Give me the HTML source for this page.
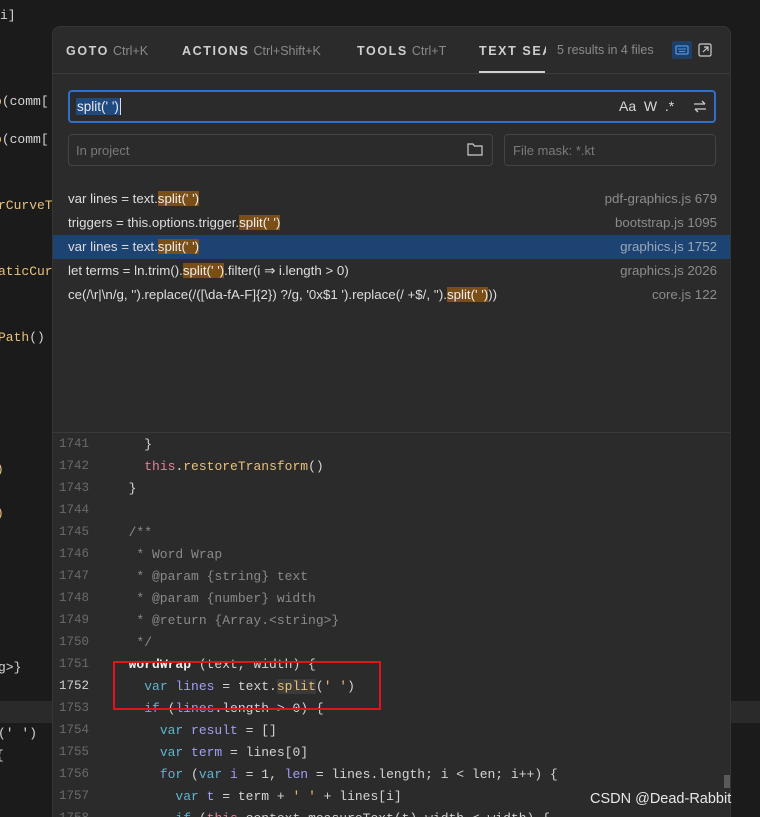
<!DOCTYPE html>
<html><head><meta charset="utf-8"><style>
*{margin:0;padding:0;box-sizing:border-box}
html,body{width:760px;height:817px;overflow:hidden}
body{background:#1b1b1b;position:relative;font-family:"Liberation Sans",sans-serif}
.bgc{position:absolute;font-family:"Liberation Mono",monospace;font-size:13px;color:#d4d4d4;white-space:pre}
.pop{position:absolute;left:52px;top:26px;width:679px;height:791px;background:#2b2b2b;border-radius:8px 8px 0 0;border:1px solid #353535;border-bottom:none;overflow:hidden}
.tab{position:absolute;top:17px;font-size:12.5px;font-weight:bold;letter-spacing:1.6px;color:#cfcfcf;white-space:nowrap}
.tab span{font-weight:normal;letter-spacing:0;color:#8a8a8a;margin-left:4px}
.sep{position:absolute;left:0;right:0;top:46px;height:1px;background:#3c3c3c}
.row{position:absolute;left:0;width:679px;height:24px;font-size:13.3px;color:#dedede;line-height:24px;white-space:nowrap}
.row .t{position:absolute;left:15px}
.row .f{position:absolute;right:15px;color:#8c8c8c}
.h{background:#7a4e17;color:#eee}
.code{position:absolute;left:0;top:405px;width:679px;height:400px;border-top:1px solid #3a3a3a;background:#2b2b2b}
.ln{position:absolute;left:-4px;width:40px;text-align:right;font-family:"Liberation Mono",monospace;font-size:12.5px;color:#6a6a6a}
.cl{position:absolute;left:60px;font-family:"Liberation Mono",monospace;font-size:13px;color:#d4d4d4;white-space:pre}
.k{color:#5fb4d0}.v{color:#9f9ff2}.fn{color:#e8c17a}.c{color:#8a8a8a}.th{color:#e0849a}
</style></head><body>
<div class="bgc" style="left:0;top:8px">i]</div>
<div class="bgc" style="left:-6px;top:94px"><span style="color:#e8c17a">o</span>(comm[</div>
<div class="bgc" style="left:-6px;top:132px"><span style="color:#e8c17a">o</span>(comm[</div>
<div class="bgc" style="left:-2px;top:198px;color:#e8c17a">rCurveT</div>
<div class="bgc" style="left:-2px;top:264px;color:#e8c17a">aticCur</div>
<div class="bgc" style="left:-2px;top:330px"><span style="color:#e8c17a">Path</span>()</div>
<div class="bgc" style="left:-4px;top:462px;color:#e8c17a">)</div>
<div class="bgc" style="left:-4px;top:506px;color:#e8c17a">)</div>
<div class="bgc" style="left:-2px;top:660px">g&gt;}</div>
<div style="position:absolute;left:0;top:701px;width:52px;height:22px;background:#2a2a2a"></div>
<div style="position:absolute;left:731px;top:701px;width:29px;height:22px;background:#2a2a2a"></div>
<div class="bgc" style="left:-2px;top:726px">(' ')</div>
<div class="bgc" style="left:-4px;top:748px">{</div>

<div class="pop">
<div class="tab" style="left:13px">GOTO<span>Ctrl+K</span></div>
<div class="tab" style="left:129px">ACTIONS<span>Ctrl+Shift+K</span></div>
<div class="tab" style="left:304px">TOOLS<span>Ctrl+T</span></div>
<div class="tab" style="left:426px;width:67px;overflow:hidden">TEXT SEARCH</div>
<div style="position:absolute;left:426px;top:44px;width:66px;height:2px;background:#d0d0d0"></div>
<div style="position:absolute;left:504px;top:16px;font-size:12.5px;color:#8a8a8a">5 results in 4 files</div>
<div style="position:absolute;left:619px;top:14px;width:20px;height:18px;background:#1f3f66;border-radius:2px"><svg width="20" height="18"><rect x="4" y="5" width="12" height="8" rx="1" fill="none" stroke="#4d94e6" stroke-width="1.3"/><path d="M6 8h8M7 10.5h6" stroke="#4d94e6"/></svg></div>
<svg style="position:absolute;left:645px;top:16px" width="14" height="14"><rect x="1" y="1" width="12" height="12" rx="1.5" fill="none" stroke="#ccc" stroke-width="1.2"/><path d="M5 9L10 4M6 4h4v4" fill="none" stroke="#ccc" stroke-width="1.2"/></svg>
<div class="sep"></div>

<div style="position:absolute;left:15px;top:63px;width:648px;height:33px;border:2px solid #2f6fcf;border-radius:4px;background:#2b2b2b"></div>
<div style="position:absolute;left:23px;top:71px;height:17px;font-size:13.5px;line-height:17px;color:#eaeaea;background:#1f4a80;padding:0 1px;border-right:1px solid #ddd">split(' ')</div>
<div style="position:absolute;left:566px;top:71px;font-size:14px;color:#d8d8d8;white-space:pre">Aa  W  .*  </div>
<svg style="position:absolute;left:640px;top:71px" width="14" height="16"><path d="M1 6h11M9 3l3 3M13 11H2M5 14l-3-3" fill="none" stroke="#ccc" stroke-width="1.3"/></svg>

<div style="position:absolute;left:15px;top:107px;width:425px;height:32px;border:1px solid #444;border-radius:4px"></div>
<div style="position:absolute;left:23px;top:116px;font-size:13px;color:#7a7a7a">In project</div>
<svg style="position:absolute;left:414px;top:115px" width="16" height="14"><path d="M1 2h5l1.5 2H15v9H1z" fill="none" stroke="#ccc" stroke-width="1.2"/></svg>
<div style="position:absolute;left:451px;top:107px;width:212px;height:32px;border:1px solid #444;border-radius:4px"></div>
<div style="position:absolute;left:460px;top:116px;font-size:13px;color:#7a7a7a">File mask: *.kt</div>

<div class="row" style="top:160px"><span class="t">var lines = text.<span class="h">split(' ')</span></span><span class="f">pdf-graphics.js 679</span></div>
<div class="row" style="top:184px"><span class="t">triggers = this.options.trigger.<span class="h">split(' ')</span></span><span class="f">bootstrap.js 1095</span></div>
<div class="row" style="top:208px;background:#1d4373"><span class="t">var lines = text.<span class="h">split(' ')</span></span><span class="f" style="color:#9aa8b8">graphics.js 1752</span></div>
<div class="row" style="top:232px"><span class="t">let terms = ln.trim().<span class="h">split(' ')</span>.filter(i ⇒ i.length &gt; 0)</span><span class="f">graphics.js 2026</span></div>
<div class="row" style="top:256px"><span class="t">ce(/\r|\n/g, '').replace(/([\da-fA-F]{2}) ?/g, '0x$1 ').replace(/ +$/, '').<span class="h">split(' ')</span>))</span><span class="f">core.js 122</span></div>

<div class="code">
<div class="ln" style="top:4px">1741</div><div class="cl" style="top:4px">    }</div>
<div class="ln" style="top:26px">1742</div><div class="cl" style="top:26px">    <span class="th">this</span>.<span class="fn">restoreTransform</span>()</div>
<div class="ln" style="top:48px">1743</div><div class="cl" style="top:48px">  }</div>
<div class="ln" style="top:70px">1744</div>
<div class="ln" style="top:92px">1745</div><div class="cl c" style="top:92px">  /**</div>
<div class="ln" style="top:114px">1746</div><div class="cl c" style="top:114px">   * Word Wrap</div>
<div class="ln" style="top:136px">1747</div><div class="cl c" style="top:136px">   * @param {string} text</div>
<div class="ln" style="top:158px">1748</div><div class="cl c" style="top:158px">   * @param {number} width</div>
<div class="ln" style="top:180px">1749</div><div class="cl c" style="top:180px">   * @return {Array.&lt;string&gt;}</div>
<div class="ln" style="top:202px">1750</div><div class="cl c" style="top:202px">   */</div>
<div class="ln" style="top:224px">1751</div><div class="cl" style="top:224px">  <b style="color:#eee">wordWrap</b> (text, width) {</div>
<div class="ln" style="top:246px;color:#d0d0d0">1752</div><div class="cl" style="top:246px">    <span class="k">var</span> <span class="v">lines</span> = text.<span style="background:#3a3a3a" class="fn">split</span>(<span class="fn">' '</span>)</div>
<div class="ln" style="top:268px">1753</div><div class="cl" style="top:268px">    <span class="k">if</span> (<span class="v">lines</span>.length &gt; 0) {</div>
<div class="ln" style="top:290px">1754</div><div class="cl" style="top:290px">      <span class="k">var</span> <span class="v">result</span> = []</div>
<div class="ln" style="top:312px">1755</div><div class="cl" style="top:312px">      <span class="k">var</span> <span class="v">term</span> = lines[0]</div>
<div class="ln" style="top:334px">1756</div><div class="cl" style="top:334px">      <span class="k">for</span> (<span class="k">var</span> <span class="v">i</span> = 1, <span class="v">len</span> = lines.length; i &lt; len; i++) {</div>
<div class="ln" style="top:356px">1757</div><div class="cl" style="top:356px">        <span class="k">var</span> <span class="v">t</span> = term + <span class="fn">' '</span> + lines[i]</div>
<div class="ln" style="top:378px">1758</div><div class="cl" style="top:378px">        <span class="k">if</span> (<span class="th">this</span>.context.measureText(t).width &lt; width) {</div>
<div style="position:absolute;left:60px;top:228px;width:268px;height:49px;border:2px solid #e3131b"></div>
<div style="position:absolute;left:671px;top:342px;width:7px;height:13px;background:#5a5a5a"></div>
</div>
</div>
<div style="position:absolute;left:590px;top:791px;font-size:14.5px;color:#e8e8e8;white-space:nowrap">CSDN @Dead-Rabbit</div>
</body></html>
